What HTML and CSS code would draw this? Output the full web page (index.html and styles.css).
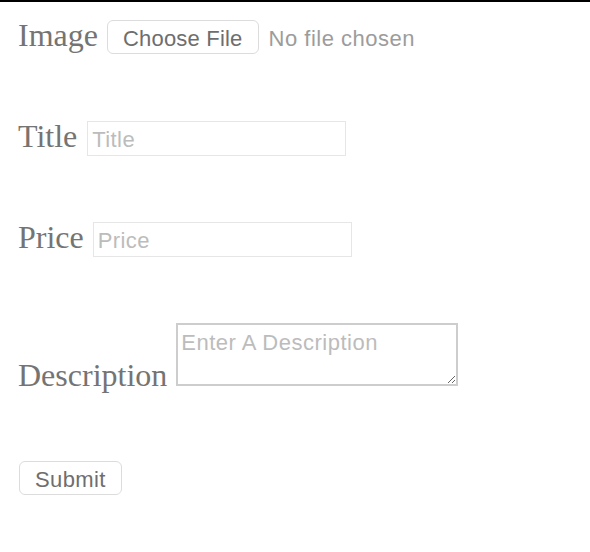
FILE: index.html
```html
<!DOCTYPE html>
<html lang="en">
<head>
<meta charset="utf-8">
<title>Add Item</title>
<link rel="stylesheet" href="styles.css">
</head>
<body>
<div class="topbar"></div>
<form class="form">
  <div class="row row-image">
    <label class="label">Image</label>
    <span class="file-btn">Choose File</span>
    <span class="file-name">No file chosen</span>
  </div>
  <div class="row row-title">
    <label class="label">Title</label>
    <input class="field field-title" type="text" placeholder="Title">
  </div>
  <div class="row row-price">
    <label class="label">Price</label>
    <input class="field" type="text" placeholder="Price">
  </div>
  <div class="row row-desc">
    <label class="label label-desc">Description</label>
    <textarea class="area" placeholder="Enter A Description"></textarea>
  </div>
  <div class="row row-submit">
    <button class="btn" type="button">Submit</button>
  </div>
</form>
</body>
</html>
```

FILE: styles.css
```css
html, body {
  margin: 0;
  padding: 0;
  background: #ffffff;
}

.topbar {
  height: 2px;
  background: #000000;
}

.form {
  display: flex;
  flex-direction: column;
  padding: 17px 0 0 18px;
}

.row {
  display: flex;
  align-items: baseline;
  gap: 9px;
}

.row-image { height: 101px; }
.row-title { height: 101px; }
.row-price { height: 102px; }
.row-desc { height: 138px; align-items: flex-start; }
.row-submit { height: 34px; padding-left: 1px; }

.label {
  font-family: "Liberation Serif", "Times New Roman", serif;
  font-size: 32px;
  line-height: 1;
  color: #747474;
  white-space: nowrap;
}

.label-desc {
  margin-top: 36px;
}

.file-btn,
.btn {
  box-sizing: border-box;
  display: inline-block;
  flex-shrink: 0;
  height: 34px;
  padding: 5px 15px 0;
  border: 1px solid #dcdcdc;
  border-radius: 6px;
  background: #ffffff;
  font-family: "Liberation Sans", Arial, sans-serif;
  font-size: 22px;
  line-height: 25px;
  letter-spacing: 0.2px;
  color: #6e6e6e;
  white-space: nowrap;
}

.btn {
  margin: 0;
  padding-top: 3px;
  letter-spacing: 0.4px;
}

.file-name {
  margin-left: 1px;
  font-family: "Liberation Sans", Arial, sans-serif;
  font-size: 22px;
  letter-spacing: 0.5px;
  color: #9c9c9c;
  white-space: nowrap;
}

.field {
  box-sizing: border-box;
  flex-shrink: 0;
  width: 259px;
  height: 35px;
  margin: 0;
  padding: 3px 4px 0;
  border: 1px solid #e6e6e6;
  border-radius: 0;
  outline: none;
  font-family: "Liberation Sans", Arial, sans-serif;
  font-size: 22px;
  letter-spacing: 0.4px;
  color: #6a6a6a;
}

.field-title {
  margin-left: 1px;
}

.field::placeholder {
  color: #bcbcbc;
}

.area {
  box-sizing: border-box;
  flex-shrink: 0;
  width: 282px;
  height: 63px;
  margin: 0;
  padding: 5px 3px;
  border: 2px solid #cdcdcd;
  border-radius: 0;
  outline: none;
  font-family: "Liberation Sans", Arial, sans-serif;
  font-size: 22px;
  letter-spacing: 0.5px;
  color: #6a6a6a;
  resize: both;
}

.area::placeholder {
  color: #bcbcbc;
}
```
